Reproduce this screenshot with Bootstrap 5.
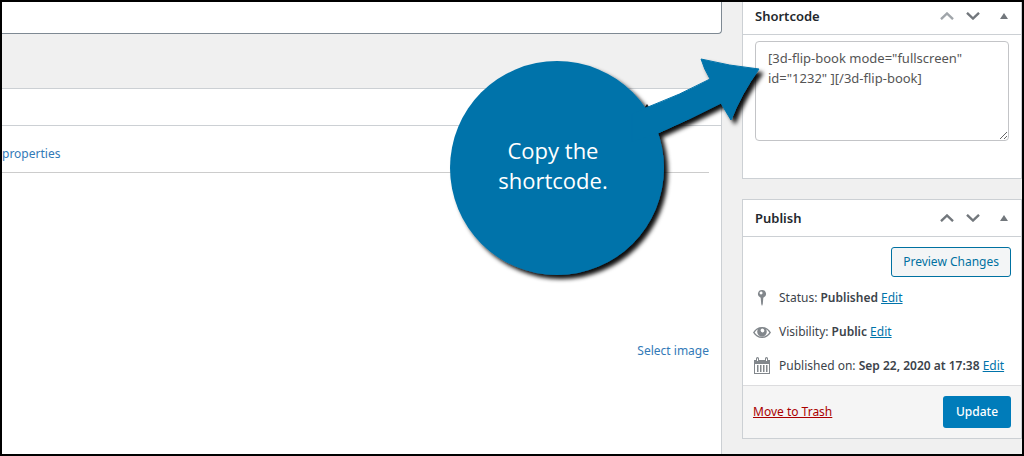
<!DOCTYPE html>
<html lang="en">
<head>
<meta charset="utf-8">
<meta name="viewport" content="width=device-width, initial-scale=1">
<title>Edit book</title>
<link href="https://cdn.jsdelivr.net/npm/bootstrap@5.3.0/dist/css/bootstrap.min.css" rel="stylesheet">
<style>
  body { background: #f0f0f0; color: #3c434a; font: 12px/20px "Noto Sans", "Open Sans", sans-serif; }
  .screen { border: 2px solid #000; gap: 20px; }
  .title-field { height: 32px; border: solid #7e8993; border-width: 0 1px 1px 0; border-radius: 0 0 4px 0; }
  .editor { border: solid #ccd0d4; border-width: 1px 1px 0 0; margin-top: 54px; }
  .editor-head { height: 37px; border-bottom: 1px solid #ccd0d4; padding-right: 70px; }
  .tabs { height: 47px; margin-right: 12px; padding-top: 10px; border-bottom: 1px solid #ccc; }
  .tabs a, .pick { color: #337ab7; text-decoration: none; }
  .pick { margin: 168px 12px 0 0; }
  .side { width: 280px; gap: 20px; }
  .panel { background: #fff; border: 1px solid #ccd0d4; }
  .panel-head { height: 37px; padding: 0 13px 0 12px; border-bottom: 1px solid #ccd0d4; }
  .panel-head h2 { font-size: 13px; line-height: 20px; font-weight: 600; color: #23282d; }
  .panel-first { border-top: 0; }
  .panel-first .panel-head { height: 33px; padding-bottom: 4px; }
  .tool { border: 0; background: none; padding: 0; color: #72777c; line-height: 0; }
  .tool.faded { color: #a0a5aa; }
  .tool.down { margin: 0 20px 0 12px; }
  .code-area { height: 100px; margin: 6px 12px 37px; width: 254px; padding: 6px 12px; border: 1px solid #c3c4c7; border-radius: 4px; color: #555; font-size: 13px; line-height: 20px; }
  .preview { height: 30px; padding: 0 11px; border: 1px solid #0071a1; border-radius: 3px; background: #f3f5f6; color: #0071a1; }
  .facts { padding: 10px 10px 9px; }
  .fact-rows { gap: 14px; padding-top: 11px; }
  .facts b { font-weight: 600; }
  .facts a { color: #0073aa; }
  .facts svg { color: #82878c; }
  .panel-foot { background: #f5f5f5; border-top: 1px solid #dcdcde; padding: 10px; }
  .trash { color: #a00; }
  .update { height: 32px; width: 68px; border: 0; border-radius: 3px; background: #007cba; color: #fff; font-weight: 500; }
  .callout { top: 50px; right: 240px; width: 340px; height: 240px; pointer-events: none; }
  .callout p { top: 83px; left: 7px; width: 208px; color: #fff; font: 22px/30px "Open Sans", sans-serif; }
</style>
</head>
<body>
<div class="screen d-flex min-vh-100 position-relative overflow-hidden">
  <main class="d-flex flex-column flex-grow-1">
    <input class="title-field w-100 bg-white" type="text" aria-label="Title">
    <section class="editor bg-white flex-grow-1 d-flex flex-column">
      <div class="editor-head d-flex align-items-center justify-content-end">
        <button class="tool text-dark" type="button" aria-label="Toggle panel"><svg width="8" height="6" viewBox="0 0 8 6"><path d="M0 6 4 0l4 6z" fill="currentColor"/></svg></button>
      </div>
      <nav class="tabs d-flex align-items-center"><a href="#">properties</a></nav>
      <a class="pick align-self-end" href="#">Select image</a>
    </section>
  </main>

  <aside class="side d-flex flex-column flex-shrink-0">
    <section class="panel panel-first">
      <div class="panel-head d-flex align-items-center">
        <h2 class="m-0 me-auto">Shortcode</h2>
        <button class="tool faded" type="button" aria-label="Move up"><svg width="14" height="8" viewBox="0 0 14 8" fill="none" stroke="currentColor" stroke-width="2.400"><path d="M1 7.200 7 1.500l6 5.700"/></svg></button>
        <button class="tool down" type="button" aria-label="Move down"><svg width="14" height="8" viewBox="0 0 14 8" fill="none" stroke="currentColor" stroke-width="2.400"><path d="M1 .8 7 6.500 13 .8"/></svg></button>
        <button class="tool" type="button" aria-label="Collapse"><svg width="8" height="6" viewBox="0 0 8 6"><path d="M0 6 4 0l4 6z" fill="currentColor"/></svg></button>
      </div>
      <textarea class="code-area d-block" aria-label="Shortcode">[3d-flip-book mode="fullscreen" id="1232" ][/3d-flip-book]</textarea>
    </section>

    <section class="panel">
      <div class="panel-head d-flex align-items-center">
        <h2 class="m-0 me-auto">Publish</h2>
        <button class="tool" type="button" aria-label="Move up"><svg width="14" height="8" viewBox="0 0 14 8" fill="none" stroke="currentColor" stroke-width="2.400"><path d="M1 7.200 7 1.500l6 5.700"/></svg></button>
        <button class="tool down" type="button" aria-label="Move down"><svg width="14" height="8" viewBox="0 0 14 8" fill="none" stroke="currentColor" stroke-width="2.400"><path d="M1 .8 7 6.500 13 .8"/></svg></button>
        <button class="tool" type="button" aria-label="Collapse"><svg width="8" height="6" viewBox="0 0 8 6"><path d="M0 6 4 0l4 6z" fill="currentColor"/></svg></button>
      </div>
      <div class="facts d-flex flex-column">
        <button class="preview align-self-end" type="button">Preview Changes</button>
        <div class="fact-rows d-flex flex-column">
          <div class="d-flex gap-2 align-items-center text-nowrap">
            <svg width="18" height="18" viewBox="0 0 18 18"><path fill="currentColor" fill-rule="evenodd" d="M9 1a4 4 0 0 1 1.300 7.800L9.800 15 9 17l-.8-2-.5-6.200A4 4 0 0 1 9 1M8 2.500a1.500 1.500 0 1 0 .1 3 1.500 1.500 0 0 0-.1-3"/></svg>
            <span>Status: <b>Published</b> <a href="#">Edit</a></span>
          </div>
          <div class="d-flex gap-2 align-items-center text-nowrap">
            <svg width="18" height="18" viewBox="0 0 18 18"><path fill="currentColor" fill-rule="evenodd" d="M0 9.500C2 6 5 4 9 4s7 2 9 5.500C16 13 13 15 9 15s-7-2-9-5.500m1.700 0C3.300 12 6 13.700 9 13.700s5.700-1.700 7.300-4.200c-.9-1.400-2-2.500-3.300-3.200.5.700.8 1.600.8 2.500a4.800 4.800 0 0 1-9.600 0c0-.9.3-1.800.8-2.500-1.300.7-2.400 1.800-3.300 3.200M9 5.500a2 2 0 0 0 .4 3.900 2 2 0 0 0 2-1.700A2.600 2.600 0 0 0 9 5.500"/></svg>
            <span>Visibility: <b>Public</b> <a href="#">Edit</a></span>
          </div>
          <div class="d-flex gap-2 align-items-center text-nowrap">
            <svg width="18" height="18" viewBox="0 0 18 18"><path fill="currentColor" fill-rule="evenodd" d="M1 3h2V1.500a1.500 1.500 0 0 1 3 0V3h6V1.500a1.500 1.500 0 0 1 3 0V3h2v14H1zm1 4v9h14V7zM4 1.500V4h1V1.500zm9 0V4h1V1.500zM4 8h1.500v7H4zm3 0h1.500v7H7zm3 0h1.500v7H10zm3 0h1.500v7H13z"/></svg>
            <span>Published on: <b>Sep 22, 2020 at 17:38</b> <a href="#">Edit</a></span>
          </div>
        </div>
      </div>
      <div class="panel-foot d-flex align-items-center justify-content-between">
        <a class="trash" href="#">Move to Trash</a>
        <button class="update" type="button">Update</button>
      </div>
    </section>
  </aside>

  <div class="callout position-absolute">
    <svg width="340" height="240" viewBox="0 0 340 240" aria-hidden="true">
      <defs><filter id="drop" x="-10%" y="-10%" width="120%" height="120%"><feDropShadow dx="4" dy="4" stdDeviation="2" flood-color="#000" flood-opacity=".95"/></filter></defs>
      <g fill="#0073aa" filter="url(#drop)">
        <circle cx="115" cy="116" r="107"/>
        <path stroke="#0073aa" stroke-linejoin="round" d="M190 62 206 55Q238 43 268 27 262 17 259 7 287 14 317 17 299 42 289 68 284 60 279 51 248 67 216 81L190 90z"/>
      </g>
    </svg>
    <p class="position-absolute m-0 text-center">Copy the<br>shortcode.</p>
  </div>
</div>
<script src="https://cdn.jsdelivr.net/npm/bootstrap@5.3.0/dist/js/bootstrap.bundle.min.js"></script>
</body>
</html>
